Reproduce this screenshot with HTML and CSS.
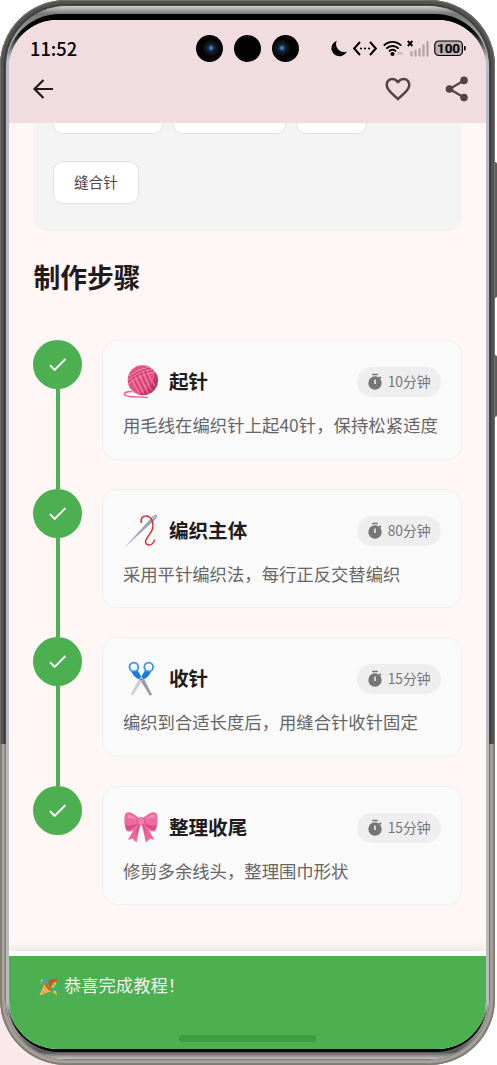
FILE: index.html
```html
<!DOCTYPE html>
<html lang="zh-CN">

<head>
  <meta charset="utf-8">
  <title>制作步骤</title>
  <link rel="stylesheet" href="styles.css">
</head>

<body>
  <!-- shared icons -->
  <svg class="defs" width="0" height="0">
    <symbol id="check" viewBox="0 0 24 24">
      <path d="M9 16.17L4.83 12l-1.42 1.41L9 19 21 7l-1.41-1.41z" fill="#fff"/>
    </symbol>
    <symbol id="timer" viewBox="0 0 16 18">
      <path d="M5.2 .8h5.600v1.500H5.200z M13 3.200l1.500 1.300-1.300 1.300-1.500-1.300z" fill="#757575"/>
      <circle cx="8" cy="10" r="6.700" fill="#757575"/>
      <path d="M7.200 6.500h1.600v4.600H7.200z" fill="#eee"/>
    </symbol>
  </svg>

  <span class="side-button volume"></span>
  <span class="side-button power"></span>
  <div class="phone">
    <div class="metal">
      <div class="glass">
        <div class="screen">
          <header class="top-bar">
            <div class="status-bar">
              <span class="time">11:52</span>
              <div class="cameras">
                <span class="camera lens-right"></span>
                <span class="camera"></span>
                <span class="camera lens-left"></span>
              </div>
              <div class="status-icons">
                <svg width="16" height="17" viewBox="0 0 16 17"><path d="M5.800 .7A8 8 0 1 0 15.800 11.500 8 8 0 0 1 5.800 .7z"/></svg>
                <svg class="i-code" width="24" height="17" viewBox="0 0 24 17"><path d="M7 2L1.200 8.500 7 15M17 2l5.800 6.500L17 15" fill="none" stroke="#000" stroke-width="2"/><circle cx="8" cy="8.500" r="1.100"/><circle cx="12" cy="8.500" r="1.100"/><circle cx="16" cy="8.500" r="1.100"/></svg>
                <svg class="i-wifi" width="20" height="17" viewBox="0 0 20 17"><path d="M.8 5.700C5.500 .6 13.500 .6 18.200 5.700M3.300 8.700c3.500-3.700 8.900-3.700 12.400 0M6 11.300c2-2 5-2 7 0" fill="none" stroke="#000" stroke-width="1.900"/><circle cx="9.500" cy="14" r="2.100"/><path d="M16.500 11.500l-2.500 1.700 2.500 1.700zM17.500 11.500l2.500 1.700-2.500 1.700z" fill="#b3a4a5"/></svg>
                <svg class="i-signal" width="22" height="17" viewBox="0 0 22 17"><path d="M.8 1l4.600 5M5.400 1L.8 6" stroke="#000" stroke-width="1.900"/><path d="M4.500 15.500v-3M8.500 15.500v-4.500M12.500 15.500V9M16.500 15.500V5.500M20.500 15.500V2" stroke="#b3a4a5" stroke-width="2.300" stroke-linecap="round"/></svg>
                <svg class="i-battery" width="32" height="17" viewBox="0 0 32 17"><rect x=".8" y="1" width="27.600" height="14.500" rx="4" fill="#bcadae" stroke="#000" stroke-width="1.200"/><rect x="30" y="6" width="1.700" height="4.500" rx=".8"/><text x="14.600" y="13.200" text-anchor="middle" textLength="23">100</text></svg>
              </div>
            </div>
            <nav class="actions">
              <svg class="back" width="24" height="24" viewBox="0 0 24 24"><path d="M12.500 3L3.500 12l9 9M3.500 12H22" fill="none" stroke="#231a1b" stroke-width="2.200"/></svg>
              <svg class="heart" width="30" height="30" viewBox="0 0 24 24"><path fill="#534345" d="M16.500 3c-1.740 0-3.410.81-4.500 2.090C10.910 3.810 9.240 3 7.500 3 4.420 3 2 5.420 2 8.500c0 3.780 3.400 6.860 8.550 11.540L12 21.350l1.450-1.320C18.600 15.360 22 12.280 22 8.500 22 5.420 19.580 3 16.500 3zm-4.400 15.550l-.1.100-.1-.1C7.140 14.240 4 11.390 4 8.500 4 6.500 5.500 5 7.500 5c1.540 0 3.040.99 3.570 2.360h1.870C13.460 5.990 14.960 5 16.500 5c2 0 3.500 1.500 3.500 3.500 0 2.890-3.140 5.740-7.900 10.050z"/></svg>
              <svg class="share" width="24" height="26" viewBox="0 0 24 26"><path d="M19 4.500L4.500 13 19 21.500" fill="none" stroke="#534345" stroke-width="2.200"/><circle cx="19" cy="4.400" r="3.800" fill="#534345"/><circle cx="4.500" cy="13" r="3.800" fill="#534345"/><circle cx="19" cy="21.600" r="3.800" fill="#534345"/></svg>
            </nav>
          </header>

          <main class="content">
            <section class="materials">
              <div class="chip-row">
                <span class="chip chip-a"></span>
                <span class="chip chip-b"></span>
                <span class="chip chip-c"></span>
              </div>
              <div class="chip-row">
                <span class="chip">缝合针</span>
              </div>
            </section>

            <h2>制作步骤</h2>

            <section class="steps">
              <div class="step">
                <div class="rail"><span class="dot"><svg width="23" height="23"><use href="#check"/></svg></span></div>
                <div class="card">
                  <div class="card-head">
                    <svg class="emoji" width="36" height="36" viewBox="0 0 36 36">
                      <circle cx="19.500" cy="16" r="14.800" fill="#e65282"/>
                      <path d="M32.500 8a14.800 14.800 0 0 1-18 22C24 28 31 20 32.500 8z" fill="#c23463"/>
                      <g fill="none" stroke="#f993b3" stroke-width=".9">
                        <path d="M6 12Q16 5 26 3M5 16Q17 7 29 5.500M5 20Q18 10 31 8M8 12q3 10 9 18M12 12q4 9 9 18M16 10q4 9 9 19M20 8q4 10 8 18M24 7q3 9 8 15"/>
                      </g>
                      <g fill="none" stroke="#b93261" stroke-width=".7">
                        <path d="M5 18Q17 8 30 6.500M6 14Q15 7 27 4M10 13q4 9 9 18M14 11q4 9 9 18M18 9q4 10 9 18M22 7q4 10 8 17"/>
                      </g>
                      <path d="M9 27.500c-6 0-9 1.500-7 3.500 3 3 14 1 23 2.500" fill="none" stroke="#ee5c8c" stroke-width="1.400"/>
                    </svg>
                    <h3>起针</h3>
                    <span class="time-tag"><svg width="16" height="18"><use href="#timer"/></svg><span>10分钟</span></span>
                  </div>
                  <p class="wide">用毛线在编织针上起40针，保持松紧适度</p>
                </div>
              </div>

              <div class="step">
                <div class="rail"><span class="dot"><svg width="23" height="23"><use href="#check"/></svg></span></div>
                <div class="card">
                  <div class="card-head">
                    <svg class="emoji" width="36" height="36" viewBox="0 0 36 36">
                      <path d="M1.500 34.500L29.500 3.500c2-2 4-2 4.500-1.500s0 3-2 4.700z" fill="#9aa5b5"/>
                      <path d="M29.500 6l2.500-2.500" stroke="#eef1f6" stroke-width=".9"/>
                      <path d="M18.500 10C17 5 20 2.500 24 3c5 1 7 7 5.500 13-1.500 5-7 9-7 13 .5 4.500 8 4 9-2.500" fill="none" stroke="#e02b35" stroke-width="1.500"/>
                    </svg>
                    <h3>编织主体</h3>
                    <span class="time-tag"><svg width="16" height="18"><use href="#timer"/></svg><span>80分钟</span></span>
                  </div>
                  <p>采用平针编织法，每行正反交替编织</p>
                </div>
              </div>

              <div class="step">
                <div class="rail"><span class="dot"><svg width="23" height="23"><use href="#check"/></svg></span></div>
                <div class="card">
                  <div class="card-head">
                    <svg class="emoji" width="36" height="36" viewBox="0 0 36 36">
                      <path d="M16 17l3.500-2L29 33.500l-2 1.500z" fill="#9699aa"/>
                      <path d="M21 17l-3.500-2L8 33l1.500 1.800z" fill="#c9cbd6"/>
                      <path d="M8 9.500l6-1 4.500 7.500-2 2.500q-6-2-8.500-9zM28.500 9.500l-6-1L18 16l2 2.500q6-2 8.500-9z" fill="#1b79df"/>
                      <circle cx="10.900" cy="6" r="4.400" fill="#f8fcff" stroke="#3993ee" stroke-width="1.800"/>
                      <circle cx="25.700" cy="6" r="4.400" fill="#f8fcff" stroke="#3993ee" stroke-width="1.800"/>
                      <path d="M16 18l2.300-3 2.300 3-2.300 3.500z" fill="#b5b8c5"/>
                      <circle cx="18.300" cy="18.300" r=".9" fill="#62687a"/>
                    </svg>
                    <h3>收针</h3>
                    <span class="time-tag"><svg width="16" height="18"><use href="#timer"/></svg><span>15分钟</span></span>
                  </div>
                  <p>编织到合适长度后，用缝合针收针固定</p>
                </div>
              </div>

              <div class="step">
                <div class="rail"><span class="dot"><svg width="23" height="23"><use href="#check"/></svg></span></div>
                <div class="card">
                  <div class="card-head">
                    <svg class="emoji" width="36" height="36" viewBox="0 0 36 36">
                      <path d="M15.500 11L5 30l4.500-1.500 4 4 4-19zM20.500 11L31.500 30 27 28.500l-4 4-4.500-19z" fill="#ee6599"/>
                      <path d="M15.500 13l-3 13 4.500-11zM20.500 13l3.500 13-4.500-11z" fill="#d54581"/>
                      <path d="M16 8.500C12 4 6 1 3 3 .5 5 1 18 4 21c3 2 9-2 12.500-6.500zM20 8.500c4-4.500 10-7.500 13-5.500 2.500 2 2 15-1 18-3 2-9-2-12.500-6.500z" fill="#ef6a9f"/>
                      <path d="M2.500 15q6 2 13-2-5 6-11 7.500-1.500-2-2-5.500zM33.500 15q-6 2-13-2 5 6 11 7.500 1.500-2 2-5.500z" fill="#dc4a86"/>
                      <path d="M4.500 4.500q5 0 10 6-7-4-10-2zM31.500 4.500q-5 0-10 6 7-4 10-2z" fill="#f68db3"/>
                      <rect x="14.700" y="7.500" width="6.800" height="7.500" rx="2.800" fill="#f37fab" stroke="#d54581" stroke-width=".6"/>
                    </svg>
                    <h3>整理收尾</h3>
                    <span class="time-tag"><svg width="16" height="18"><use href="#timer"/></svg><span>15分钟</span></span>
                  </div>
                  <p>修剪多余线头，整理围巾形状</p>
                </div>
              </div>
            </section>
          </main>

          <footer class="snackbar">
            <svg width="19" height="19" viewBox="0 0 19 19">
              <path d="M.5 18.500L5.500 6.500Q11 8 12.500 14z" fill="#fdc13c"/>
              <path d="M4 10l4.500 6M2.500 13.500l3 3.700M5.500 7.500l5.500 7" stroke="#d88a9c" stroke-width="1.200"/>
              <ellipse cx="9.200" cy="10.200" rx="1.700" ry="4.800" transform="rotate(-42 9.200 10.200)" fill="#c96a1e"/>
              <path d="M7 6q2-3 0-5M12.500 11.500q3-2 5.500 0" fill="none" stroke="#35a5e8" stroke-width="1.700"/>
              <path d="M10 8q4 0 3-5 3 1 5-1M9.500 6q2-1 1.500-3" fill="none" stroke="#d94a26" stroke-width="1.900"/>
              <path d="M2 3l1.800 1M14.500 15.500l2.500-1M15 6l2 1.500M13 9.500l2-1" stroke="#ffc93b" stroke-width="2"/>
              <circle cx="2" cy="5.500" r="1" fill="#4fb5ee"/>
              <circle cx="17" cy="17" r="1" fill="#ffb52c"/>
            </svg>
            <span>恭喜完成教程！</span>
            <i class="home-indicator"></i>
          </footer>
        </div>
      </div>
    </div>
  </div>
</body>

</html>
```
FILE: styles.css
```css
* {
  box-sizing: border-box;
}

body {
  margin: 0;
  width: 497px;
  height: 1065px;
  overflow: hidden;
  position: relative;
  background: linear-gradient(to right, #fae8ec 0 120px, #fff 120px) 0 744px no-repeat, #fff;
  font-family: "Noto Sans CJK SC", sans-serif;
}

svg {
  display: block;
  flex: none;
}

.defs {
  position: absolute;
}

/* phone body */
.phone {
  position: relative;
  width: 495px;
  height: 1065px;
  padding: 6px;
  border-radius: 66px;
  background: linear-gradient(#484949 744px, #e6dfd4 744px);
  box-shadow: inset 0 0 0 1px rgba(125, 122, 115, .75), inset 0 0 0 2px rgba(90, 85, 78, .4), inset 0 0 0 4px rgba(190, 185, 175, .2), inset 0 0 0 5px rgba(30, 28, 25, .35);
}

.side-button {
  position: absolute;
  right: 0;
  width: 3px;
  border-radius: 0 2px 2px 0;
  background: #5b5c5c;
}

.volume {
  top: 162px;
  height: 136px;
}

.power {
  top: 355px;
  height: 62px;
}

.metal {
  height: 1053px;
  padding: 8px 0 7px;
  border-radius: 60px;
  background: linear-gradient(#d0d0d0, #777 8px, transparent 50px, transparent 1005px, #555 1046px, #c6c6c6), linear-gradient(to right, #888, #c4c6c8 3px, #c4c6c8 480px, #888);
  box-shadow: 0 0 0 1px rgba(75, 75, 74, .7);
}

.glass {
  height: 1038px;
  padding: 6px 3px 3px;
  border-radius: 54px;
  background: linear-gradient(#000 18px, #b9bbbd 44px, #b9bbbd 990px, #000 1018px);
}

.screen {
  position: relative;
  display: flex;
  flex-direction: column;
  height: 1029px;
  overflow: hidden;
  border-radius: 48px;
  background: #fff7f5;
}

/* header */
.top-bar {
  height: 103px;
  flex: none;
  background: #f1dddf;
}

.status-bar {
  position: relative;
  display: flex;
  align-items: center;
  justify-content: space-between;
  height: 57px;
  padding: 0 20px 0 21px;
}

.time {
  margin-top: -2px;
  font-size: 18.300px;
  font-weight: 500;
  line-height: 26px;
}

.cameras {
  position: absolute;
  left: 187px;
  top: 15px;
  display: flex;
  gap: 11px;
}

.camera {
  width: 27px;
  height: 27px;
  border-radius: 50%;
  background: #030303;
}

.lens-right {
  background: radial-gradient(circle at 15px 13px, #4a86b8 0 1px, #123c68 2.500px, #10151b 5px, #131313 7px, #030303 8px);
}

.lens-left {
  background: radial-gradient(circle at 10px 13px, #4a86b8 0 1px, #123c68 2.500px, #10151b 5px, #131313 7px, #030303 8px);
}

.status-icons {
  display: flex;
  align-items: center;
}

.i-code {
  margin-left: 6px;
}

.i-wifi {
  margin-left: 6px;
}

.i-signal {
  margin-left: 4px;
}

.i-battery {
  margin-left: 5px;
}

.i-battery text {
  font-family: Roboto, sans-serif;
  font-size: 13.500px;
  font-weight: 700;
}

.actions {
  display: flex;
  align-items: center;
  height: 24px;
  padding: 0 17px 0 22px;
}

.heart {
  margin-left: auto;
}

.share {
  margin-left: 32px;
}

/* scrolled page */
.content {
  height: 828px;
  flex: none;
  overflow: hidden;
  padding: 0 24.400px;
}

.materials {
  display: flex;
  flex-direction: column;
  gap: 27px;
  height: 154px;
  margin-top: -45.600px;
  padding: 14px 19.500px;
  border-radius: 14px;
  background: #f4f4f4;
}

.chip-row {
  display: flex;
  gap: 10px;
}

.chip {
  height: 43px;
  padding: 0 20px;
  border: 1.500px solid #e0e0e0;
  border-radius: 10px;
  background: #fff;
  color: #534345;
  font-size: 14.700px;
  line-height: 40px;
}

.chip-a {
  width: 110px;
}

.chip-b {
  width: 113px;
}

.chip-c {
  width: 71px;
}

h2 {
  margin: 25.500px 0 43.500px;
  color: #231a1b;
  font-size: 26.800px;
  font-weight: 700;
  line-height: 40px;
}

.step {
  display: flex;
  gap: 19.500px;
  height: 148.400px;
}

.rail {
  display: flex;
  flex-direction: column;
  align-items: center;
  width: 49px;
  flex: none;
}

.rail::after {
  content: "";
  width: 4px;
  flex: 1;
  background: #4caf50;
}

.step:last-child .rail::after {
  display: none;
}

.dot {
  display: flex;
  align-items: center;
  justify-content: center;
  width: 49px;
  height: 49px;
  border-radius: 50%;
  background: #4caf50;
}

.card {
  flex: 1;
  min-width: 0;
  height: 119.500px;
  padding: 23px 20px 0;
  border: 1.500px solid #eff0f1;
  border-radius: 15px;
  background: #fafafa;
}

.card-head {
  display: flex;
  align-items: center;
  height: 36px;
}

.card h3 {
  margin: -2px auto 0 10px;
  color: #231a1b;
  font-size: 19.600px;
  font-weight: 700;
  line-height: 28px;
}

.time-tag {
  display: flex;
  align-items: center;
  gap: 5px;
  height: 30px;
  padding: 0 10px;
  border-radius: 15px;
  background: #eee;
  color: #757575;
  font-size: 13.800px;
}

.time-tag span {
  margin-top: -2px;
}

.card p {
  margin: 11px 0 0;
  color: #666;
  font-size: 17.350px;
  line-height: 28px;
  white-space: nowrap;
}

.card .wide {
  letter-spacing: .05px;
}

/* completion message */
.snackbar {
  position: relative;
  display: flex;
  gap: 6px;
  height: 98px;
  padding: 21px 30px 0;
  border-top: 5px solid #fff;
  background: #4caf50;
  box-shadow: 0 -2px 10px rgba(0, 0, 0, .1);
  color: #f5eeee;
  font-size: 17.300px;
  line-height: 16px;
}

.home-indicator {
  position: absolute;
  left: 170px;
  bottom: 7px;
  width: 137px;
  height: 7px;
  border-radius: 4px;
  background: #3d9e40;
}
```
